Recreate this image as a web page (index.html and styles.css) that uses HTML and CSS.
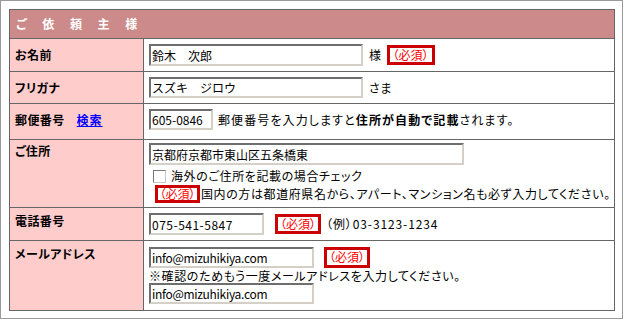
FILE: index.html
```html
<!DOCTYPE html>
<html lang="ja">
<head>
<meta charset="utf-8">
<title>ご依頼主様</title>
<link rel="stylesheet" href="styles.css">
</head>
<body>
<div class="frame">
  <div class="form">
    <div class="head">ご 依 頼 主 様</div>

    <div class="label mid">お名前</div>
    <div class="value mid">
      <input class="field w-name" type="text" value="鈴木　次郎">
      <span class="suffix">様</span>
      <span class="req r1">（必須）</span>
    </div>

    <div class="label mid">フリガナ</div>
    <div class="value mid">
      <input class="field w-name kana" type="text" value="スズキ　ジロウ">
      <span class="suffix">さま</span>
    </div>

    <div class="label mid up">郵便番号 <a class="search" href="#">検索</a></div>
    <div class="value mid up">
      <input class="field w-zip" type="text" value="605-0846">
      <span class="note">郵便番号を入力しますと<b>住所が自動で記載</b>されます。</span>
    </div>

    <div class="label top addr">ご住所</div>
    <div class="value stack addr-v">
      <input class="field w-addr" type="text" value="京都府京都市東山区五条橋東">
      <label class="check-line"><input class="check" type="checkbox"><span>海外のご住所を記載の場合チェック</span></label>
      <div class="req-line"><span class="req r-small">（必須）</span>国内の方は都道府県名から、アパート、マンション名も必ず入力してください。</div>
    </div>

    <div class="label top">電話番号</div>
    <div class="value mid">
      <input class="field w-tel" type="text" value="075-541-5847">
      <span class="req r-tel">（必須）</span>
      <span class="example">（例）03-3123-1234</span>
    </div>

    <div class="label top">メールアドレス</div>
    <div class="value stack mail-v">
      <div class="mail-line">
        <input class="field w-mail" type="text" value="info@mizuhikiya.com">
        <span class="req r-mail">（必須）</span>
      </div>
      <div class="mail-note">※確認のためもう一度メールアドレスを入力してください。</div>
      <input class="field w-mail" type="text" value="info@mizuhikiya.com">
    </div>
  </div>
</div>
</body>
</html>
```

FILE: styles.css
```css
html, body {
  margin: 0;
  padding: 0;
  background: #ffffff;
}

body {
  font-family: "Noto Sans CJK JP", "Noto Sans", sans-serif;
  font-size: 12px;
  line-height: 16px;
  color: #000000;
  font-feature-settings: "palt";
}

.frame {
  box-sizing: border-box;
  width: 623px;
  height: 319px;
  border: 1px solid #9a9a9a;
  padding: 8px;
}

.form {
  box-sizing: border-box;
  width: 606px;
  display: grid;
  grid-template-columns: 133px 470px;
  grid-template-rows: 28px 32px 31px 35px 67px 32px 69px;
  gap: 1px;
  padding: 1px;
  background: #666666;
}

.head {
  grid-column: 1 / 3;
  background: #cc8a8a;
  color: #ffffff;
  font-weight: bold;
  letter-spacing: 6.5px;
  padding-left: 6px;
  display: flex;
  align-items: center;
}

.label {
  background: #ffcccc;
  font-weight: bold;
  padding-left: 5px;
  letter-spacing: 0.4px;
}

.label.mid {
  display: flex;
  align-items: center;
}

.label.top {
  padding-top: 5px;
}

.label.addr {
  padding-top: 3px;
}

.up {
  padding-bottom: 4px;
  box-sizing: border-box;
}

.search {
  color: #0000ff;
  text-decoration: underline;
  margin-left: 12px;
  letter-spacing: 1px;
}

.value {
  background: #ffffff;
  padding-left: 5px;
  letter-spacing: 0.6px;
}

.value.mid {
  display: flex;
  align-items: center;
}

.value.stack {
  display: flex;
  flex-direction: column;
  align-items: flex-start;
}

.field {
  box-sizing: border-box;
  height: 22px;
  margin: 0;
  padding: 0 1px;
  font-family: "Noto Sans CJK JP", "Noto Sans", sans-serif;
  font-size: 12px;
  letter-spacing: 0;
  color: #000000;
  background: #ffffff;
  border-style: solid;
  border-width: 2px;
  border-color: #6e6e6e #d4d0c8 #d4d0c8 #6e6e6e;
  outline: none;
  font-feature-settings: normal;
}

.w-name { width: 214px; }
.kana { height: 21px; }
.w-zip { width: 64px; height: 21px; }
.w-addr { width: 315px; }
.w-tel { width: 115px; letter-spacing: 0.5px; }
.w-mail { width: 165px; height: 21px; letter-spacing: -0.3px; }

.suffix {
  margin-left: 6px;
}

.req {
  box-sizing: border-box;
  display: inline-flex;
  align-items: center;
  justify-content: center;
  border: 3px solid #cc0000;
  background: #ffffff;
  color: #ff0000;
  white-space: nowrap;
  line-height: 14px;
  letter-spacing: 0;
}

.r1 {
  width: 48px;
  height: 20px;
  margin-left: 5px;
}

.r-tel {
  width: 46px;
  height: 20px;
  margin-left: 11px;
}

.r-mail {
  width: 46px;
  height: 21px;
  margin-left: 10px;
}

.r-small {
  width: 45px;
  height: 18px;
  margin-left: 6px;
  margin-right: 1px;
}

.note {
  margin-left: 5px;
  white-space: nowrap;
  letter-spacing: 1.1px;
}

.example {
  margin-left: 5px;
  letter-spacing: 0.9px;
}

.addr-v {
  padding-top: 3px;
}

.check-line {
  display: flex;
  align-items: center;
  height: 16px;
  margin-top: 3px;
  white-space: nowrap;
}

.check {
  appearance: none;
  -webkit-appearance: none;
  box-sizing: border-box;
  width: 13px;
  height: 13px;
  margin: 0 5px 0 4px;
  background: #ffffff;
  border: 1px solid;
  border-color: #7a7a7a #c8c8c8 #c8c8c8 #7a7a7a;
}

.req-line {
  display: flex;
  align-items: center;
  height: 19px;
  white-space: nowrap;
}

.mail-v {
  padding-top: 5px;
}

.mail-line {
  display: flex;
  align-items: center;
  height: 22px;
}

.mail-note {
  height: 15px;
  line-height: 15px;
  white-space: nowrap;
}
```
